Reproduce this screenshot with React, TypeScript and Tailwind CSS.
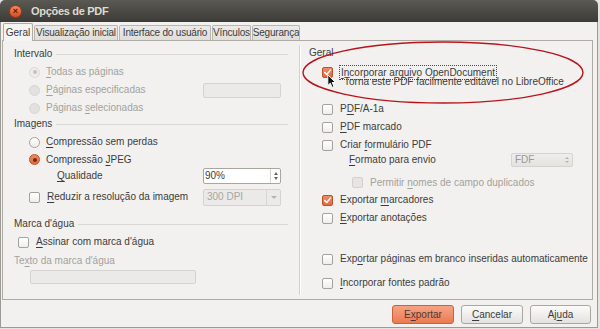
import type { ReactNode } from 'react';

const U = ({ children }: { children: ReactNode }) => (
  <span className="underline underline-offset-[1.5px] decoration-[1px]">{children}</span>
);

const CheckMark = () => (
  <svg viewBox="0 0 11 11" className="w-[11px] h-[11px]">
    <path d="M2.2 5.6 L4.6 8 L9 2.6" fill="none" stroke="#fff" strokeWidth="1.9" strokeLinecap="round" strokeLinejoin="round" />
  </svg>
);

const Check = ({ checked = false, disabled = false }: { checked?: boolean; disabled?: boolean }) => {
  if (checked) {
    return (
      <span className="w-[11px] h-[11px] shrink-0 rounded-[2px] border border-[#b9532c] bg-gradient-to-b from-[#f08a62] to-[#e26a3f] flex items-center justify-center">
        <CheckMark />
      </span>
    );
  }
  if (disabled) {
    return <span className="w-[11px] h-[11px] shrink-0 rounded-[2px] border border-[#d3d1cc] bg-[#e6e5e3]" />;
  }
  return (
    <span className="w-[11px] h-[11px] shrink-0 rounded-[2px] border border-[#a5a29b] bg-gradient-to-b from-white to-[#efeeec]" />
  );
};

type RadioKind = 'off' | 'on' | 'disabled' | 'disabledOn';

const Radio = ({ kind }: { kind: RadioKind }) => {
  if (kind === 'on') {
    return (
      <span className="w-[11px] h-[11px] shrink-0 rounded-full border border-[#b9532c] bg-gradient-to-b from-[#f08a62] to-[#e26a3f] flex items-center justify-center">
        <span className="w-[4px] h-[4px] rounded-full bg-[#6e2a12]" />
      </span>
    );
  }
  if (kind === 'disabledOn') {
    return (
      <span className="w-[11px] h-[11px] shrink-0 rounded-full border border-[#dcdad6] bg-[#eeedeb] flex items-center justify-center">
        <span className="w-[4px] h-[4px] rounded-full bg-[#c4c2bd]" />
      </span>
    );
  }
  if (kind === 'disabled') {
    return <span className="w-[11px] h-[11px] shrink-0 rounded-full border border-[#d8d6d2] bg-[#e2e1de]" />;
  }
  return <span className="w-[11px] h-[11px] shrink-0 rounded-full border border-[#a5a29b] bg-gradient-to-b from-white to-[#efeeec]" />;
};

const GroupHeader = ({ label, className = '' }: { label: string; className?: string }) => (
  <div className={`flex items-center pl-[11px] pr-[11px] ${className}`}>
    <span>{label}</span>
    <span className="flex-1 h-px bg-[#dad8d4] ml-[4px]" />
  </div>
);

const tabs = [
  { label: 'Geral', w: 'w-[30px]', active: true },
  { label: 'Visualização inicial', w: 'w-[84px]' },
  { label: 'Interface do usuário', w: 'w-[92px]' },
  { label: 'Vínculos', w: 'w-[39px]' },
  { label: 'Segurança', w: 'w-[48px]' },
];

const SpinArrows = () => (
  <span className="w-[10px] self-stretch border-l border-[#d3d1cc] flex flex-col items-center justify-center gap-[2px]">
    <span className="w-0 h-0 border-x-[2.5px] border-x-transparent border-b-[3px] border-b-[#6a6864]" />
    <span className="w-0 h-0 border-x-[2.5px] border-x-transparent border-t-[3px] border-t-[#6a6864]" />
  </span>
);

const LeftColumn = () => (
  <div className="w-[296px] flex flex-col pt-[4px]">
    <GroupHeader label="Intervalo" className="h-[18px]" />
    <div className="h-[18px] flex items-center pl-[26px] gap-[6px] text-[#a3a19c]">
      <Radio kind="disabledOn" />
      <span><U>T</U>odas as páginas</span>
    </div>
    <div className="h-[18px] flex items-center pl-[26px] pr-[18px] text-[#a3a19c]">
      <Radio kind="disabled" />
      <span className="ml-[6px]"><U>P</U>áginas especificadas</span>
      <span className="ml-auto w-[78px] h-[15px] rounded-[2px] border border-[#d5d3cf] bg-[#ebeae8]" />
    </div>
    <div className="h-[18px] flex items-center pl-[26px] gap-[6px] text-[#a3a19c]">
      <Radio kind="disabled" />
      <span>Páginas <U>s</U>elecionadas</span>
    </div>
    <GroupHeader label="Imagens" className="h-[14px]" />
    <div className="mt-[2px] h-[18px] flex items-center pl-[26px] gap-[6px]">
      <Radio kind="off" />
      <span><U>C</U>ompressão sem perdas</span>
    </div>
    <div className="h-[17px] flex items-center pl-[26px] gap-[6px]">
      <Radio kind="on" />
      <span>Compressão <U>J</U>PEG</span>
    </div>
    <div className="h-[16px] flex items-center pl-[54px] pr-[18px]">
      <span><U>Q</U>ualidade</span>
      <span className="ml-auto w-[78px] h-[16px] rounded-[2px] border border-[#a9a69f] bg-white flex items-center">
        <span className="flex-1 pl-[1px] text-[#3c3c3c]">90%</span>
        <SpinArrows />
      </span>
    </div>
    <div className="mt-[4px] h-[18px] flex items-center pl-[26px] pr-[18px]">
      <Check />
      <span className="ml-[7px]"><U>R</U>eduzir a resolução da imagem</span>
      <span className="ml-auto w-[78px] h-[17px] rounded-[2px] border border-[#d5d3cf] bg-[#ebeae8] flex items-center text-[#a8a6a1]">
        <span className="flex-1 pl-[3px]">300 DPI</span>
        <span className="w-[14px] self-stretch border-l border-[#d8d6d2] flex items-center justify-center">
          <span className="w-0 h-0 border-x-[3px] border-x-transparent border-t-[3px] border-t-[#b5b3ae]" />
        </span>
      </span>
    </div>
    <GroupHeader label="Marca d'água" className="mt-[11px] h-[14px]" />
    <div className="mt-[2px] h-[18px] flex items-center pl-[15px] gap-[7px]">
      <Check />
      <span><U>A</U>ssinar com marca d'água</span>
    </div>
    <div className="mt-[3px] h-[14px] flex items-center pl-[11px] text-[#a3a19c]">
      <span>Te<U>x</U>to da marca d'água</span>
    </div>
    <div className="mt-[2px] ml-[27px] w-[166px] h-[14px] rounded-[2px] border border-[#d5d3cf] bg-[#ebeae8]" />
  </div>
);

const Row = ({ checked = false, children, className = '' }: { checked?: boolean; children: ReactNode; className?: string }) => (
  <div className={`h-[18px] flex items-center pl-[21px] gap-[7px] ${className}`}>
    <Check checked={checked} />
    <span>{children}</span>
  </div>
);

const RightColumn = () => (
  <div className="flex-1 flex flex-col pt-[5px]">
    <div className="h-[14px] flex items-center pl-[8px]">
      <span>Geral</span>
    </div>
    <div className="mt-[4px] h-[16px] flex items-center pl-[21px] gap-[6px]">
      <Check checked />
      <span className="border border-dotted border-[#4a4a4a] px-[1px] leading-[13px]"><U>I</U>ncorporar arquivo OpenDocument</span>
    </div>
    <div className="-mt-[4px] h-[12px] leading-[12px] pl-[43px]">Torna este PDF facilmente editável no LibreOffice</div>
    <Row className="mt-[12px]">P<U>D</U>F/A-1a</Row>
    <Row><U>P</U>DF marcado</Row>
    <Row>Criar <U>f</U>ormulário PDF</Row>
    <div className="-mt-[1px] h-[14px] flex items-center pl-[48px] pr-[19px]">
      <span><U>F</U>ormato para envio</span>
      <span className="ml-auto w-[62px] h-[14px] rounded-[2px] border border-[#d5d3cf] bg-gradient-to-b from-[#efeeec] to-[#e4e3e0] flex items-center text-[#9a9893]">
        <span className="flex-1 pl-[3px]">FDF</span>
        <span className="w-[10px] flex flex-col items-center gap-[2px]">
          <span className="w-0 h-0 border-x-[2px] border-x-transparent border-b-[2px] border-b-[#b5b3ae]" />
          <span className="w-0 h-0 border-x-[2px] border-x-transparent border-t-[2px] border-t-[#b5b3ae]" />
        </span>
      </span>
    </div>
    <div className="mt-[7px] h-[17px] flex items-center pl-[51px] gap-[7px] text-[#a3a19c]">
      <Check disabled />
      <span>Permitir <U>n</U>omes de campo duplicados</span>
    </div>
    <Row checked className="h-[17px]">Exportar <U>m</U>arcadores</Row>
    <Row><U>E</U>xportar anotações</Row>
    <Row className="mt-[23px]">Exp<U>o</U>rtar páginas em branco inseridas automaticamente</Row>
    <Row className="mt-[6px]"><U>I</U>ncorporar fontes padrão</Row>
  </div>
);

export default function App() {
  return (
    <div className="w-[600px] h-[329px] bg-[#e4e3e0] relative overflow-hidden font-['Liberation_Sans',Arial,sans-serif] text-[10px] leading-none text-[#3c3c3c]">
      <div className="w-[598px] h-[328px] flex flex-col">
        <div className="h-[22px] shrink-0 rounded-t-[5px] bg-gradient-to-b from-[#5a5954] to-[#3c3b37] flex items-center pl-[9px]">
          <span className="w-[13px] h-[13px] rounded-full border border-[#9e3a17] bg-gradient-to-b from-[#f5895c] to-[#d9491c] flex items-center justify-center text-[9px] font-bold text-[#5b1c08]">
            ×
          </span>
          <span className="ml-[9px] text-[11px] font-bold tracking-[-0.3px] text-[#dfdbd2]">Opções de PDF</span>
        </div>
        <div className="flex-1 flex flex-col bg-[#f2f1f0] border-x border-b border-[#9c9a95]">
          <div className="h-[18px] flex items-end pl-[2px] gap-[1px] relative z-10">
            {tabs.map((t) =>
              t.active ? (
                <div
                  key={t.label}
                  className={`${t.w} h-[18px] -mb-px rounded-t-[2px] border border-b-0 border-[#aeaba5] bg-[#f5f4f3] flex items-center justify-center whitespace-nowrap`}
                >
                  {t.label}
                </div>
              ) : (
                <div
                  key={t.label}
                  className={`${t.w} h-[15px] rounded-t-[2px] border border-b-0 border-[#b9b6b0] bg-gradient-to-b from-[#ecebe9] to-[#dfdedb] flex items-center justify-center whitespace-nowrap overflow-hidden tracking-[-0.2px]`}
                >
                  {t.label}
                </div>
              )
            )}
          </div>
          <div className="ml-[1px] mr-[4px] h-[260px] border border-[#aeaba5] flex">
            <LeftColumn />
            <div className="flex my-[4px]">
              <span className="w-px bg-[#d3d1cd]" />
              <span className="w-px bg-white" />
            </div>
            <RightColumn />
          </div>
          <div className="flex-1 flex items-start justify-end pt-[5px] pr-[6px] gap-[7px]">
            <button className="w-[62px] h-[19px] rounded-[3px] border border-[#c8613c] bg-gradient-to-b from-[#f7a284] to-[#eb7a52] text-[10px] text-[#4a3a34]">
              E<U>x</U>portar
            </button>
            <button className="w-[62px] h-[19px] rounded-[3px] border border-[#aaa7a1] bg-gradient-to-b from-[#fbfbfa] to-[#e3e2df] text-[10px] text-[#3c3c3c]">
              <U>C</U>ancelar
            </button>
            <button className="w-[61px] h-[19px] rounded-[3px] border border-[#aaa7a1] bg-gradient-to-b from-[#fbfbfa] to-[#e3e2df] text-[10px] text-[#3c3c3c]">
              Aj<U>u</U>da
            </button>
          </div>
        </div>
      </div>
      <svg className="absolute left-0 top-0 w-[600px] h-[329px] pointer-events-none" viewBox="0 0 600 329">
        <ellipse cx="443" cy="72.5" rx="140" ry="30.5" fill="none" stroke="#b8141c" strokeWidth="1.4" />
      </svg>
      <svg className="absolute left-[327px] top-[74px] w-[10px] h-[15px]" viewBox="0 0 10 15">
        <path d="M0.8 0.8 L0.8 11.5 L3.3 9.2 L5.1 13.4 L7 12.6 L5.2 8.5 L8.6 8.5 Z" fill="#111" stroke="#fff" strokeWidth="1" strokeLinejoin="round" />
      </svg>
    </div>
  );
}
